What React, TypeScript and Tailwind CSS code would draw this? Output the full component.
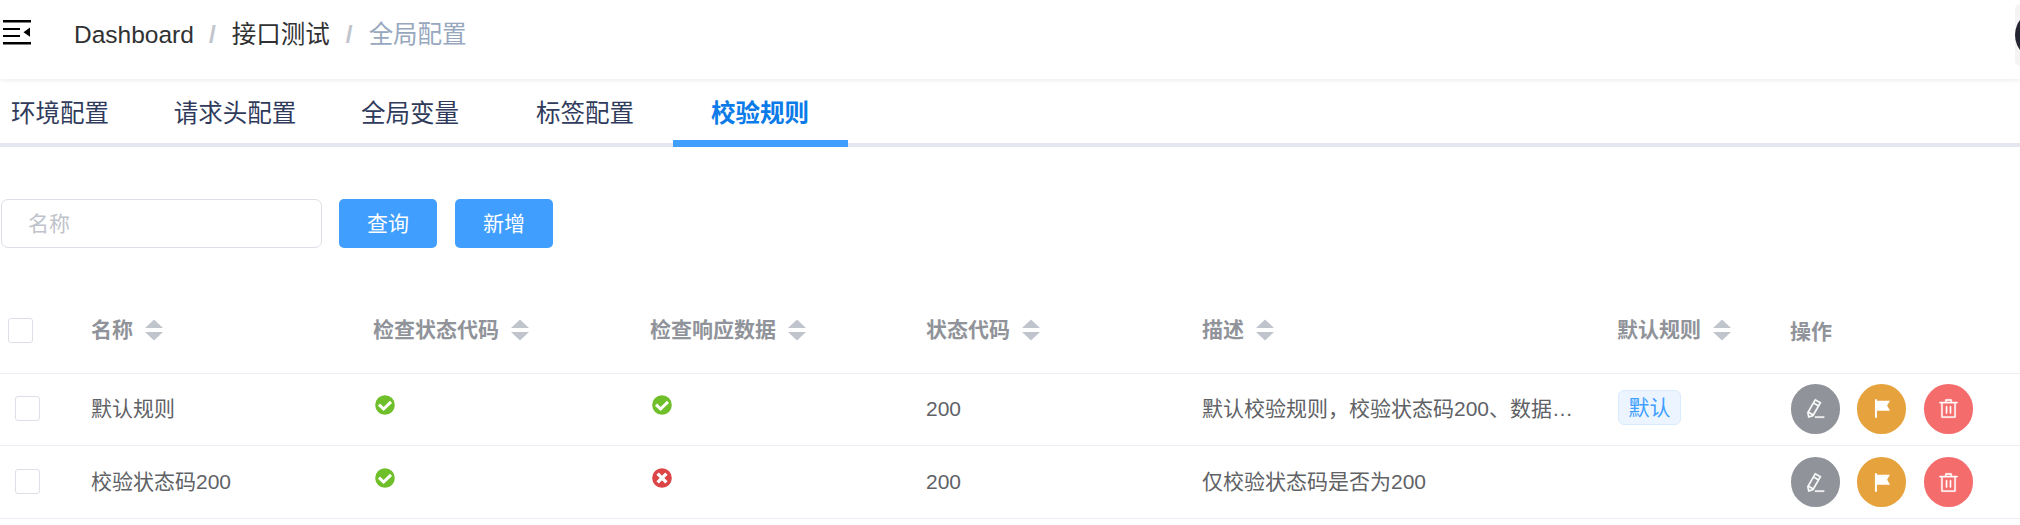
import type { ReactNode } from "react";

const tabs = ["请求头配置", "全局变量", "标签配置"];

function Sorter() {
  return (
    <svg className="ml-[12px] h-[22px] w-[18px] shrink-0" viewBox="0 0 18 22" fill="#c0c4cc">
      <path d="M0 9 L9 0.5 L18 9 Z" />
      <path d="M0 13 L9 21.5 L18 13 Z" />
    </svg>
  );
}

function Head({ children }: { children: ReactNode }) {
  return (
    <div className="flex items-center font-bold text-[#909399]">
      <span>{children}</span>
      <Sorter />
    </div>
  );
}

function Checkbox({ className }: { className: string }) {
  return <div className={`h-[25px] w-[25px] rounded-[3px] border border-[#dcdfe6] bg-white ${className}`} />;
}

function Status({ ok }: { ok: boolean }) {
  return (
    <svg className="mb-[8px] ml-[2px] h-[20px] w-[20px]" viewBox="0 0 20 20" fill="none" stroke="#fff">
      <circle cx="10" cy="10" r="9.8" stroke="none" fill={ok ? "#6fbf2b" : "#dc4446"} />
      {ok ? (
        <path d="M4 9.6 L8.6 14 L16 6.8" strokeWidth="3" />
      ) : (
        <path d="M5.6 5.6 L14.4 14.4 M14.4 5.6 L5.6 14.4" strokeWidth="3.4" />
      )}
    </svg>
  );
}

function Actions() {
  return (
    <div className="ml-px flex gap-[17px]">
      <div className="flex h-[50px] w-[49px] items-center justify-center rounded-full bg-[#909399]">
        <svg className="h-[21px] w-[21px]" viewBox="0 0 1024 1024" fill="#fff" stroke="#fff" strokeWidth="18">
          <path d="m199.04 672.64 193.984 112 224-387.968-193.92-112-224 388.032zm-23.872 60.16 32.896 148.288 144.896-45.696L175.168 732.8zM455.04 229.248l193.92 112 56.704-98.112-193.984-112-56.64 98.112zM104.32 708.8l384-665.024 304.768 175.936L409.152 884.8h.064l-248.448 78.336L104.32 708.8zm384 254.272v-64h448v64h-448z" />
        </svg>
      </div>
      <div className="flex h-[50px] w-[49px] items-center justify-center rounded-full bg-[#e6a23c]">
        <svg className="h-[21px] w-[21px]" viewBox="0 0 1024 1024" fill="#fff">
          <path d="M192 64h96v64h640L784 370l144 250H288v340h-96z" />
        </svg>
      </div>
      <div className="ml-px flex h-[50px] w-[49px] items-center justify-center rounded-full bg-[#f56c6c]">
        <svg className="h-[21px] w-[21px]" viewBox="0 0 1024 1024" fill="#fff" stroke="#fff" strokeWidth="18">
          <path d="M160 256H96a32 32 0 0 1 0-64h256V95.936a32 32 0 0 1 32-32h256a32 32 0 0 1 32 32V192h256a32 32 0 1 1 0 64h-64v672a32 32 0 0 1-32 32H192a32 32 0 0 1-32-32V256zm448-64v-64H416v64h192zM224 896h576V256H224v640zm192-128a32 32 0 0 1-32-32V416a32 32 0 0 1 64 0v320a32 32 0 0 1-32 32zm192 0a32 32 0 0 1-32-32V416a32 32 0 0 1 64 0v320a32 32 0 0 1-32 32z" />
        </svg>
      </div>
    </div>
  );
}

const grid =
  "grid grid-cols-[91px_282px_277px_276px_276px_415px_173px_230px] items-center border-b border-[#ebeef5]";

export default function App() {
  return (
    <div className="h-[525px] w-[2020px] overflow-hidden bg-white font-['Liberation_Sans','Noto_Sans_CJK_SC',sans-serif] text-[21px] leading-[30px] font-normal text-[#606266]">
      <header className="flex h-[79px] items-center justify-between pb-[9px] text-[24.5px] shadow-[0_1px_5px_rgba(0,21,41,0.09)]">
        <div className="flex items-center">
          <svg className="mt-[-6px] ml-[2px] h-[26px] w-[29px]" viewBox="0 0 29 26" fill="#000">
            <path d="M1 1h28v2.4H1zM1 9h17v2H1zM1 16h17v2H1zM1 23h28v2.4H1zM21.5 13.2L28 8.6V17.8z" />
          </svg>
          <div className="ml-[43px] flex items-center text-[#303133]">
            <span className="w-[119px]">Dashboard</span>
            <span className="mx-[16px] font-bold text-[#c0c4cc]">/</span>
            <span>接口测试</span>
            <span className="mx-[16px] font-bold text-[#c0c4cc]">/</span>
            <span className="text-[#97a8be]">全局配置</span>
          </div>
        </div>
        <div className="h-[62px] w-[5px] overflow-hidden rounded-l-[8px] bg-[#f4f4f5]">
          <div className="mt-[6px] h-[50px] w-[50px] rounded-full bg-[#252433]" />
        </div>
      </header>

      <nav className="flex h-[68px] text-[24.5px] text-[#303b5c]">
        <div className="w-[148px] border-b-4 border-[#e4e7ed] pt-[20px] pl-[11px]">环境配置</div>
        {tabs.map((t) => (
          <div key={t} className="w-[175px] border-b-4 border-[#e4e7ed] pt-[20px] pr-px text-center">
            {t}
          </div>
        ))}
        <div className="w-[175px] border-b-[7px] border-[#409eff] pt-[20px] pr-px text-center font-bold text-[#0a7be8]">
          校验规则
        </div>
        <div className="flex-1 border-b-4 border-[#e4e7ed]" />
      </nav>

      <div className="mt-[52px] flex h-[49px] pl-px text-white">
        <div className="flex w-[321px] items-center rounded-[7px] border border-[#dcdfe6] pl-[26px] text-[#bfc3cb]">
          名称
        </div>
        <button className="ml-[17px] w-[98px] rounded-[5px] bg-[#409eff]">查询</button>
        <button className="ml-[18px] w-[98px] rounded-[5px] bg-[#409eff]">新增</button>
      </div>

      <div className="mt-[39px]">
        <div className={`${grid} h-[87px]`}>
          <Checkbox className="ml-[8px]" />
          <Head>名称</Head>
          <Head>检查状态代码</Head>
          <Head>检查响应数据</Head>
          <Head>状态代码</Head>
          <Head>描述</Head>
          <Head>默认规则</Head>
          <div className="mt-[4px] font-bold text-[#909399]">操作</div>
        </div>
        <div className={`${grid} h-[72px] pb-[2px]`}>
          <Checkbox className="ml-[15px]" />
          <div>默认规则</div>
          <Status ok />
          <Status ok />
          <div>200</div>
          <div className="whitespace-nowrap">默认校验规则，校验状态码200、数据…</div>
          <div className="mb-[2px] ml-px flex h-[35px] w-[63px] items-center justify-center rounded-[6px] border border-[#d9ecff] bg-[#ecf5ff] text-[#409eff]">
            默认
          </div>
          <Actions />
        </div>
        <div className={`${grid} h-[73px]`}>
          <Checkbox className="ml-[15px] mb-[2px]" />
          <div>校验状态码200</div>
          <Status ok />
          <Status ok={false} />
          <div>200</div>
          <div>仅校验状态码是否为200</div>
          <div />
          <Actions />
        </div>
      </div>
    </div>
  );
}
